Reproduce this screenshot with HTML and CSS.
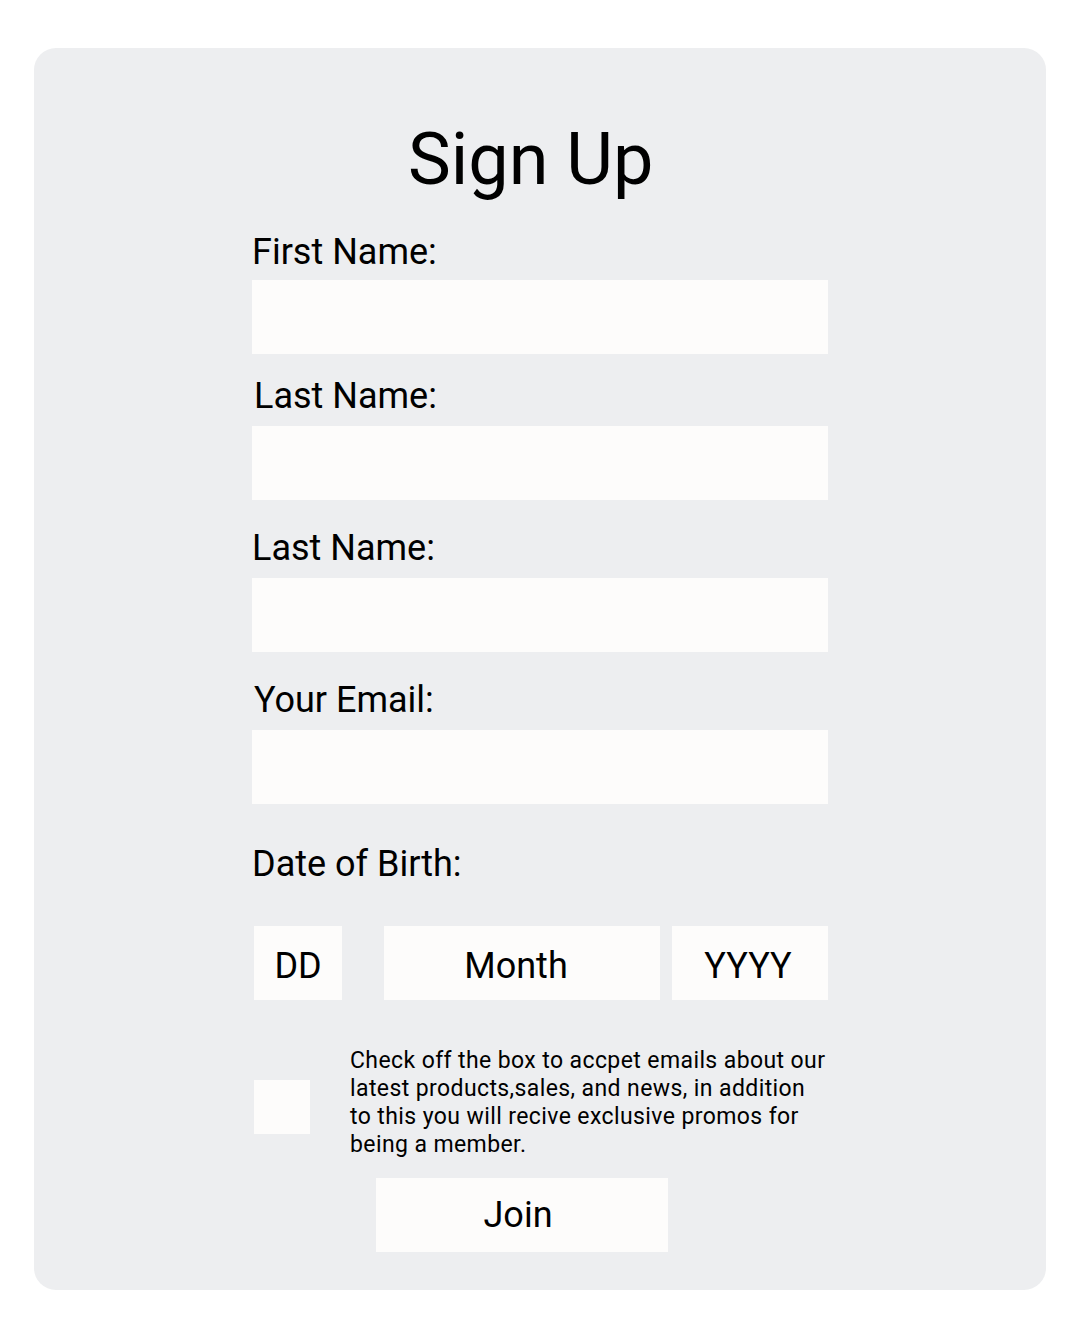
FILE: index.html
```html
<!DOCTYPE html>
<html lang="en">
<head>
<meta charset="utf-8">
<title>Sign Up</title>
<link rel="stylesheet" href="styles.css">
</head>
<body>
<div class="card">
  <form class="form">
    <h1 class="title">Sign Up</h1>

    <label class="label label-first">First Name:</label>
    <div class="field"></div>

    <label class="label label-next indent">Last Name:</label>
    <div class="field"></div>

    <label class="label label-spaced">Last Name:</label>
    <div class="field"></div>

    <label class="label label-spaced indent">Your Email:</label>
    <div class="field"></div>

    <label class="label label-dob">Date of Birth:</label>
    <div class="dob">
      <div class="box box-dd">DD</div>
      <div class="box box-month">Month</div>
      <div class="box box-year">YYYY</div>
    </div>

    <div class="consent">
      <div class="checkbox"></div>
      <p class="consent-text">Check off the box to accpet emails about our latest products,sales, and news, in addition to this you will recive exclusive promos for being a member.</p>
    </div>

    <div class="join">Join</div>
  </form>
</div>
</body>
</html>
```

FILE: styles.css
```css
html, body {
  margin: 0;
  padding: 0;
  background: #ffffff;
}

body {
  font-family: Roboto, "Liberation Sans", Arial, sans-serif;
  color: #000000;
  padding: 48px 0 0 34px;
}

.card {
  width: 1012px;
  box-sizing: border-box;
  background: #edeef0;
  border-radius: 22px;
  padding: 70px 0 38px 0;
  display: flex;
  justify-content: center;
}

.form {
  width: 576px;
  display: flex;
  flex-direction: column;
  margin: 0;
}

.title {
  margin: 0;
  padding-left: 156px;
  font-size: 72px;
  line-height: 84px;
  font-weight: 400;
}

.label {
  display: block;
  font-size: 36px;
  line-height: 42px;
  margin-bottom: 7px;
}

.label-first {
  margin-top: 29px;
}

.label-next {
  margin-top: 21px;
  margin-bottom: 9px;
}

.label-spaced {
  margin-top: 27px;
  margin-bottom: 9px;
}

.label-dob {
  margin-top: 39px;
  margin-bottom: 41px;
}

.indent {
  padding-left: 2px;
}

.field {
  height: 74px;
  background: #fdfcfb;
}

.dob {
  display: flex;
  padding-left: 2px;
}

.box {
  height: 74px;
  box-sizing: border-box;
  padding-top: 6px;
  background: #fdfcfb;
  display: flex;
  align-items: center;
  justify-content: center;
  font-size: 36px;
}

.box-dd {
  width: 88px;
}

.box-month {
  width: 276px;
  margin-left: 42px;
  padding-right: 12px;
}

.box-year {
  width: 156px;
  margin-left: 12px;
  padding-right: 4px;
}

.consent {
  display: flex;
  align-items: flex-start;
  margin-top: 47px;
  padding-left: 2px;
}

.checkbox {
  width: 56px;
  height: 54px;
  flex: none;
  background: #fdfcfb;
  margin-top: 33px;
}

.consent-text {
  margin: 0 0 0 40px;
  font-size: 23px;
  line-height: 28px;
  letter-spacing: 0.4px;
  width: 482px;
}

.join {
  margin-top: 19px;
  margin-left: 124px;
  width: 292px;
  height: 74px;
  background: #fdfcfb;
  display: flex;
  align-items: center;
  justify-content: center;
  font-size: 36px;
  padding-right: 8px;
  box-sizing: border-box;
}
```
